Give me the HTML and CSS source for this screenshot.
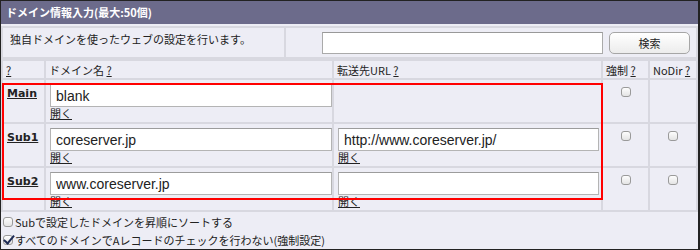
FILE: index.html
```html
<!DOCTYPE html>
<html lang="ja">
<head>
    <meta charset="UTF-8">
    <title>ドメイン情報入力</title>
    <link rel="stylesheet" href="styles.css">
</head>
<body>
    <div class="panel">
        <div class="panel-title">ドメイン情報入力(最大:50個)</div>

        <table class="intro">
            <tr>
                <td class="intro-text">独自ドメインを使ったウェブの設定を行います。</td>
                <td class="intro-search">
                    <input type="text" class="search-input">
                    <button class="search-btn">検索</button>
                </td>
            </tr>
        </table>

        <div class="domain-area">
            <table class="domains">
                <colgroup>
                    <col class="col-label">
                    <col class="col-name">
                    <col class="col-url">
                    <col class="col-force">
                    <col class="col-nodir">
                </colgroup>
                <tr class="head">
                    <th><a href="#">?</a></th>
                    <th>ドメイン名 <a href="#">?</a></th>
                    <th>転送先URL <a href="#">?</a></th>
                    <th>強制 <a href="#">?</a></th>
                    <th>NoDir <a href="#">?</a></th>
                </tr>
                <tr>
                    <td class="label"><a href="#">Main</a></td>
                    <td>
                        <input type="text" class="name-input" value="blank">
                        <a href="#" class="open">開く</a>
                    </td>
                    <td></td>
                    <td class="check"><input type="checkbox" class="box"></td>
                    <td class="check"></td>
                </tr>
                <tr>
                    <td class="label"><a href="#">Sub1</a></td>
                    <td>
                        <input type="text" class="name-input" value="coreserver.jp">
                        <a href="#" class="open">開く</a>
                    </td>
                    <td>
                        <input type="text" class="url-input" value="http://www.coreserver.jp/">
                        <a href="#" class="open">開く</a>
                    </td>
                    <td class="check"><input type="checkbox" class="box"></td>
                    <td class="check"><input type="checkbox" class="box"></td>
                </tr>
                <tr>
                    <td class="label"><a href="#">Sub2</a></td>
                    <td>
                        <input type="text" class="name-input" value="www.coreserver.jp">
                        <a href="#" class="open">開く</a>
                    </td>
                    <td>
                        <input type="text" class="url-input" value="">
                        <a href="#" class="open">開く</a>
                    </td>
                    <td class="check"><input type="checkbox" class="box"></td>
                    <td class="check"><input type="checkbox" class="box"></td>
                </tr>
            </table>
            <div class="highlight"></div>
        </div>

        <div class="options">
            <label><input type="checkbox" class="box">Subで設定したドメインを昇順にソートする</label>
            <label><input type="checkbox" class="box" checked>すべてのドメインでAレコードのチェックを行わない(強制設定)</label>
        </div>
    </div>
</body>
</html>
```

FILE: styles.css
```css
body {
    margin: 0;
    font-family: "Noto Sans CJK JP", sans-serif;
    font-size: 11px;
    color: #222;
}

a {
    color: #222;
}

.panel {
    width: 700px;
    height: 250px;
    box-sizing: border-box;
    border: 1px solid #222;
    border-right-width: 2px;
    background: #ededf5;
    overflow: hidden;
}

.panel-title {
    height: 23px;
    line-height: 23px;
    padding-left: 5px;
    background: #6c6b8b;
    color: #fff;
    font-weight: bold;
}

/* 説明と検索 */
.intro {
    width: 100%;
    margin-top: 2px;
    border-collapse: collapse;
}

.intro td {
    border: 2px solid #d8d8e0;
    height: 29px;
    padding: 0;
}

.intro-text {
    width: 274px;
    padding-left: 7px !important;
    vertical-align: top;
    line-height: 22px;
}

.intro-search {
    text-align: right;
    padding-right: 6px !important;
    white-space: nowrap;
}

.search-input {
    width: 281px;
    height: 22px;
    box-sizing: border-box;
    border: 1px solid #aaa;
    border-top-color: #999;
    vertical-align: middle;
    margin: 0 4px 0 0;
}

.search-btn {
    width: 81px;
    height: 22px;
    border: 1px solid #a6a6a6;
    border-radius: 5px;
    background: linear-gradient(#ffffff, #ececec);
    font-family: "Noto Sans CJK JP", sans-serif;
    font-size: 11px;
    color: #222;
    vertical-align: middle;
    padding: 0;
}

/* ドメイン一覧 */
.domain-area {
    position: relative;
}

.domains {
    width: 100%;
    border-collapse: collapse;
    table-layout: fixed;
}

.col-label { width: 43px; }
.col-name { width: 288px; }
.col-url { width: 269px; }
.col-force { width: 47px; }

.domains th,
.domains td {
    border: 2px solid #d8d8e0;
    text-align: left;
    vertical-align: top;
    padding: 2px 4px 2px;
}

.domains th {
    font-weight: normal;
    height: 15px;
    line-height: 15px;
    padding: 2px 3px 0;
}

.domains td {
    height: 36px;
}

.label a {
    font-family: "DejaVu Sans", sans-serif;
    font-weight: bold;
    font-size: 11px;
    line-height: 14px;
}

.label {
    padding-top: 4px !important;
}

.name-input,
.url-input {
    display: block;
    height: 23px;
    box-sizing: border-box;
    border: 1px solid #b4b4b4;
    border-top-color: #9c9c9c;
    padding: 0 5px;
    margin: 2px 0 0;
    font-family: "Liberation Sans", sans-serif;
    font-size: 14px;
    color: #222;
}

.name-input { width: 282px; }
.url-input { width: 261px; }

.open {
    display: block;
    line-height: 12px;
    font-size: 11px;
}

.check {
    text-align: center !important;
}

/* チェックボックス */
.box {
    -webkit-appearance: none;
    appearance: none;
    width: 10px;
    height: 10px;
    margin: 5px 0 0;
    border: 1px solid #9a9a9a;
    border-radius: 3px;
    background: linear-gradient(#fdfdfd, #e4e4e4);
    position: relative;
    vertical-align: top;
}

.box:checked::after {
    content: "";
    position: absolute;
    left: 2px;
    top: -3px;
    width: 4px;
    height: 9px;
    border: solid #1d2a55;
    border-width: 0 2px 2px 0;
    transform: rotate(40deg);
}

.highlight {
    position: absolute;
    left: 1px;
    top: 24px;
    width: 597px;
    height: 113px;
    border: 2px solid #f00;
    pointer-events: none;
}

.options {
    padding: 1px 0 0 1px;
}

.options label {
    display: block;
    line-height: 18px;
}

.options .box {
    margin: 4px 2px 0 1px;
}
```
